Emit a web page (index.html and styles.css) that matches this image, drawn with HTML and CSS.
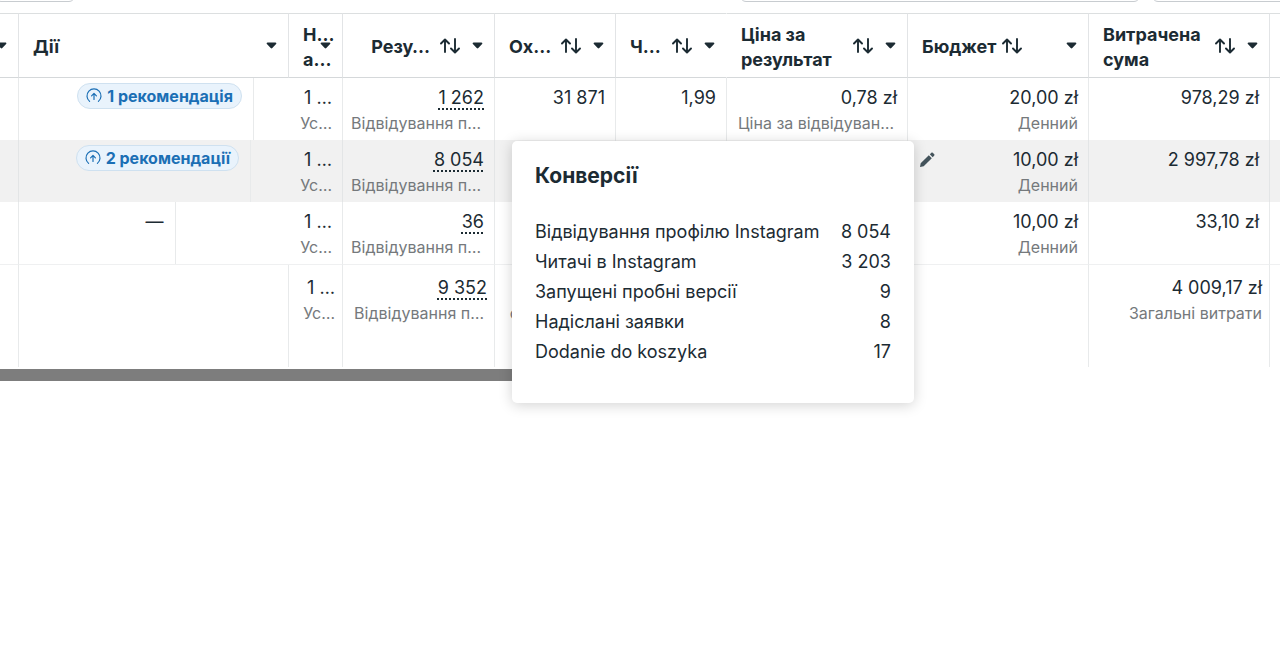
FILE: index.html
```html
<!DOCTYPE html>
<html lang="uk">
<head>
    <meta charset="UTF-8">
    <meta name="viewport" content="width=device-width, initial-scale=1.0">
    <title>Кампанії</title>
    <link rel="stylesheet" href="styles.css">
</head>
<body>
    <!-- Shared icons -->
    <svg class="sprite" aria-hidden="true">
        <symbol id="icon-caret" viewBox="0 0 11 7">
            <path d="M1.6 0.5h7.8c0.9 0 1.3 1 0.7 1.6L6.3 6.1c-0.4 0.5-1.2 0.5-1.6 0L0.9 2.1C0.3 1.5 0.7 0.5 1.6 0.5z" fill="currentColor"/>
        </symbol>
        <symbol id="icon-sort" viewBox="0 0 20 16">
            <path d="M5 14V2M1 5.5l4-4 4 4M15 1v13M11 10.5l4 4 4-4" fill="none" stroke="currentColor" stroke-width="1.9" stroke-linecap="round" stroke-linejoin="round"/>
        </symbol>
        <symbol id="icon-up" viewBox="0 0 16 16">
            <path d="M3.6 13.4A7 7 0 1 1 12.4 13.4M8 11.5V5.6M5.6 7.8L8 5.4l2.4 2.4" fill="none" stroke="currentColor" stroke-width="1.2" stroke-linecap="round" stroke-linejoin="round"/>
        </symbol>
        <symbol id="icon-pencil" viewBox="0 0 16 16">
            <path d="M1 15l0.7-3.8 8.1-8 3 3-8.1 8zM10.8 2.3l1.4-1.4c0.5-0.5 1.2-0.5 1.7 0l1.2 1.2c0.5 0.5 0.5 1.2 0 1.7l-1.4 1.4z" fill="currentColor"/>
        </symbol>
    </svg>

    <div class="toolbar">
        <div class="tool-box tool-left"></div>
        <div class="tool-box tool-search"></div>
        <div class="tool-box tool-right"></div>
    </div>

    <div class="table-area">
        <table class="campaigns">
            <colgroup>
                <col class="col-edge">
                <col class="col-actions">
                <col class="col-attribution">
                <col class="col-results">
                <col class="col-reach">
                <col class="col-frequency">
                <col class="col-money">
                <col class="col-money">
                <col class="col-money">
                <col class="col-last">
            </colgroup>
            <thead>
                <tr>
                    <th><div class="head head-edge"><button class="caret" aria-label="Меню"><svg><use href="#icon-caret"/></svg></button></div></th>
                    <th><div class="head"><span class="label">Дії</span><button class="caret" aria-label="Меню"><svg><use href="#icon-caret"/></svg></button></div></th>
                    <th><div class="head head-narrow"><span class="label">Н…<br>а…</span><button class="caret" aria-label="Меню"><svg><use href="#icon-caret"/></svg></button></div></th>
                    <th><div class="head head-end"><span class="label">Резу…</span><button class="sort" aria-label="Сортувати"><svg><use href="#icon-sort"/></svg></button><button class="caret" aria-label="Меню"><svg><use href="#icon-caret"/></svg></button></div></th>
                    <th><div class="head"><span class="label">Ох…</span><button class="sort" aria-label="Сортувати"><svg><use href="#icon-sort"/></svg></button><button class="caret" aria-label="Меню"><svg><use href="#icon-caret"/></svg></button></div></th>
                    <th class="no-line"><div class="head"><span class="label">Ч…</span><button class="sort" aria-label="Сортувати"><svg><use href="#icon-sort"/></svg></button><button class="caret" aria-label="Меню"><svg><use href="#icon-caret"/></svg></button></div></th>
                    <th><div class="head"><span class="label">Ціна за<br>результат</span><button class="sort" aria-label="Сортувати"><svg><use href="#icon-sort"/></svg></button><button class="caret" aria-label="Меню"><svg><use href="#icon-caret"/></svg></button></div></th>
                    <th><div class="head head-start"><span class="label">Бюджет</span><button class="sort" aria-label="Сортувати"><svg><use href="#icon-sort"/></svg></button><button class="caret" aria-label="Меню"><svg><use href="#icon-caret"/></svg></button></div></th>
                    <th><div class="head"><span class="label">Витрачена<br>сума</span><button class="sort" aria-label="Сортувати"><svg><use href="#icon-sort"/></svg></button><button class="caret" aria-label="Меню"><svg><use href="#icon-caret"/></svg></button></div></th>
                    <th></th>
                </tr>
            </thead>
            <tbody>
                <tr>
                    <td></td>
                    <td class="actions">
                        <div class="action-slot slot-one"><button class="pill"><svg><use href="#icon-up"/></svg>1 рекомендація</button></div>
                    </td>
                    <td>1 …<small>Ус…</small></td>
                    <td><a href="#conversions">1 262</a><small class="cut">Відвідування п…</small></td>
                    <td>31 871</td>
                    <td>1,99</td>
                    <td>0,78 zł<small class="cut">Ціна за відвідуван…</small></td>
                    <td>20,00 zł<small>Денний</small></td>
                    <td>978,29 zł</td>
                    <td></td>
                </tr>
                <tr class="hovered">
                    <td></td>
                    <td class="actions">
                        <div class="action-slot slot-two"><button class="pill"><svg><use href="#icon-up"/></svg>2 рекомендації</button></div>
                    </td>
                    <td>1 …<small>Ус…</small></td>
                    <td><a href="#conversions">8 054</a><small class="cut">Відвідування п…</small></td>
                    <td></td>
                    <td></td>
                    <td></td>
                    <td>
                        <div class="budget"><button class="edit" aria-label="Редагувати"><svg><use href="#icon-pencil"/></svg></button>10,00 zł</div>
                        <small>Денний</small>
                    </td>
                    <td>2 997,78 zł</td>
                    <td></td>
                </tr>
                <tr>
                    <td></td>
                    <td class="actions">
                        <div class="action-slot slot-none">—</div>
                    </td>
                    <td>1 …<small>Ус…</small></td>
                    <td><a href="#conversions">36</a><small class="cut">Відвідування п…</small></td>
                    <td></td>
                    <td></td>
                    <td></td>
                    <td>10,00 zł<small>Денний</small></td>
                    <td>33,10 zł</td>
                    <td></td>
                </tr>
            </tbody>
            <tfoot>
                <tr>
                    <td></td>
                    <td></td>
                    <td>1 …<small>Ус…</small></td>
                    <td><a href="#conversions">9 352</a><small class="cut">Відвідування п…</small></td>
                    <td>&nbsp;<small>облікові за…</small></td>
                    <td></td>
                    <td></td>
                    <td></td>
                    <td>4 009,17 zł<small>Загальні витрати</small></td>
                    <td></td>
                </tr>
            </tfoot>
        </table>
        <div class="scroll-track"><div class="scroll-thumb"></div></div>

        <!-- Conversions tooltip -->
        <div class="popover" id="conversions">
            <h2>Конверсії</h2>
            <table class="conversions">
                <tr><th scope="row">Відвідування профілю Instagram</th><td>8 054</td></tr>
                <tr><th scope="row">Читачі в Instagram</th><td>3 203</td></tr>
                <tr><th scope="row">Запущені пробні версії</th><td>9</td></tr>
                <tr><th scope="row">Надіслані заявки</th><td>8</td></tr>
                <tr><th scope="row">Dodanie do koszyka</th><td>17</td></tr>
            </table>
        </div>
    </div>
</body>
</html>
```
FILE: styles.css
```css
* {
    box-sizing: border-box;
}

body {
    min-height: 100vh;
    margin: 0;
    background: #fff;
    color: #1c2b33;
    font-family: Inter, Roboto, sans-serif;
    font-size: 18px;
    line-height: 26px;
}

button {
    display: flex;
    align-items: center;
    padding: 0;
    border: none;
    background: none;
    color: inherit;
    font: inherit;
    cursor: pointer;
}

.sprite {
    display: none;
}

/* Toolbar above the table, only its lower edge is in view */
.toolbar {
    display: flex;
    align-items: flex-end;
    height: 13px;
    padding-bottom: 11px;
}

.tool-box {
    flex: none;
    height: 12px;
    border: 1px solid #c8ccd0;
    border-radius: 6px;
}

.tool-left {
    width: 80px;
    margin-left: -5px;
    margin-right: auto;
}

.tool-search {
    width: 400px;
    margin-right: 12px;
}

.tool-right {
    width: 136px;
    margin-right: -8px;
}

.table-area {
    position: relative;
}

/* Main table */
.campaigns {
    width: 100%;
    table-layout: fixed;
    border-collapse: separate;
    border-spacing: 0;
}

.col-edge { width: 19px; }
.col-actions { width: 270px; }
.col-attribution { width: 54px; }
.col-results { width: 152px; }
.col-reach { width: 121px; }
.col-frequency { width: 111px; }
.col-money { width: 181px; }
.col-last { width: 10px; }

.campaigns > thead th {
    height: 65px;
    padding: 0;
    border-top: 1px solid #dcdfe0;
    border-right: 1px solid #e2e4e6;
    border-bottom: 1px solid #d5d8da;
    line-height: 25px;
    text-align: left;
}

.campaigns > thead .no-line {
    border-right-color: transparent;
}

.campaigns > tbody > tr > td {
    height: 62px;
    padding: 7px 10px 3px 0;
    border-right: 1px solid #e8eaeb;
    vertical-align: top;
    text-align: right;
    white-space: nowrap;
}

.campaigns > tbody > tr:last-child > td {
    height: 63px;
    border-bottom: 1px solid #eff0f1;
}

.campaigns > tbody > .hovered > td {
    background: #f1f1f1;
    border-right-color: #e3e5e6;
}

.campaigns > tfoot td {
    height: 102px;
    padding: 10px 7px 0 0;
    border-right: 1px solid #e8eaeb;
    vertical-align: top;
    text-align: right;
    white-space: nowrap;
}

.campaigns > * > tr > :last-child,
.campaigns > tbody > tr > :last-child {
    border-right: none;
}

.campaigns small {
    display: block;
    color: #75797c;
    font-size: 16px;
    line-height: 25px;
}

.campaigns .cut {
    padding-right: 3px;
}

.campaigns td a {
    color: inherit;
    text-decoration: underline dotted 2px;
    text-underline-offset: 4px;
}

/* Column heads */
.head {
    display: flex;
    align-items: center;
    padding: 0 11px 0 14px;
}

.label {
    margin-right: auto;
    padding-top: 2px;
    white-space: nowrap;
}

.head-end .label {
    margin-left: auto;
    margin-right: 10px;
}

.head-start .label {
    margin-right: 6px;
}

.head-start .caret {
    margin-left: auto;
}

.sort svg {
    width: 20px;
    height: 16px;
}

.caret {
    margin-left: 12px;
}

.caret svg {
    width: 11px;
    height: 7px;
}

.head-edge {
    justify-content: flex-end;
    padding-left: 0;
}

.head-edge .caret {
    margin-left: 0;
}

.head-narrow {
    position: relative;
}

.head-narrow .caret {
    position: absolute;
    right: 11px;
}

/* Recommendations */
.campaigns > tbody > tr > .actions {
    padding: 0;
    border-right: none;
}

.action-slot {
    display: flex;
    align-items: flex-start;
    justify-content: flex-end;
    height: 62px;
    padding: 5px 11px 0 0;
    border-right: 1px solid #e8eaeb;
}

.slot-one { width: 87%; }
.slot-two { width: 86%; }

.slot-none {
    width: 58%;
    padding-top: 7px;
}

.pill {
    gap: 5px;
    height: 26px;
    padding: 0 8px;
    border: 1px solid #cfe1f0;
    border-radius: 13px;
    background: #e9f3fc;
    color: #1b6fb5;
    font-size: 16px;
    font-weight: bold;
}

.pill svg {
    width: 16px;
    height: 16px;
}

.budget {
    display: flex;
    align-items: center;
    justify-content: space-between;
    padding-left: 11px;
}

.edit svg {
    width: 16px;
    height: 16px;
    color: #44545c;
}

.scroll-track {
    padding-top: 2px;
}

.scroll-thumb {
    width: 60%;
    height: 12px;
    background: #7d7d7d;
}

/* Popover */
.popover {
    position: absolute;
    top: 128px;
    left: 40%;
    min-width: 402px;
    padding: 22px 23px 36px;
    border-radius: 5px;
    background: #fff;
    box-shadow: 0 2px 14px rgba(0, 0, 0, 0.18);
}

.popover h2 {
    margin: 0 0 28px;
    font-size: 21px;
    line-height: 26px;
}

.conversions {
    width: 100%;
    border-collapse: collapse;
    line-height: 30px;
}

.conversions th {
    padding: 0 12px 0 0;
    font-weight: normal;
    text-align: left;
    white-space: nowrap;
}

.conversions td {
    padding: 0;
    text-align: right;
    white-space: nowrap;
}
```
